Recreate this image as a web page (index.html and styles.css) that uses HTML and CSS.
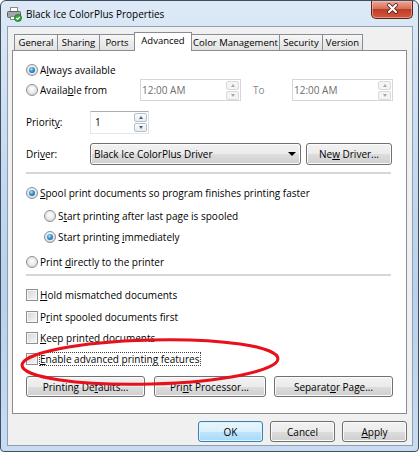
FILE: index.html
```html
<!DOCTYPE html>
<html lang="en">
<head>
  <meta charset="UTF-8" />
  <title>Black Ice ColorPlus Properties</title>
  <link rel="stylesheet" href="styles.css">
</head>
<body>
  <div class="window">
    <div class="titlebar">
      <svg class="title-icon" width="15" height="15" viewBox="0 0 15 15">
        <rect x="3.5" y="0.5" width="7" height="4" fill="#fff" stroke="#8a8a8a" />
        <rect x="0.5" y="4.5" width="13" height="6" rx="1" fill="#a3a7ad" stroke="#5d6166" />
        <rect x="3.5" y="9.5" width="6" height="3" fill="#fff" stroke="#8a8a8a" />
        <circle cx="11" cy="11" r="3.5" fill="#34a93c" stroke="#1b6e22" stroke-width="0.8" />
        <path d="M9.2 11 l1.3 1.3 2.3 -2.5" fill="none" stroke="#fff" stroke-width="1.2" />
      </svg>
      <span class="title">Black Ice ColorPlus Properties</span>
      <div class="close">
        <svg width="42" height="18" viewBox="0 0 42 18">
          <path d="M18 5 L25 12 M25 5 L18 12" stroke="#4a1a12" stroke-width="3.8" stroke-linecap="round" />
          <path d="M18 5 L25 12 M25 5 L18 12" stroke="#fff" stroke-width="2.2" stroke-linecap="round" />
        </svg>
      </div>
    </div>

    <div class="client">
      <div class="tabs">
        <div class="tab w-general">General</div>
        <div class="tab w-sharing">Sharing</div>
        <div class="tab w-ports">Ports</div>
        <div class="tab active w-advanced">Advanced</div>
        <div class="tab w-color">Color Management</div>
        <div class="tab w-security">Security</div>
        <div class="tab w-version">Version</div>
      </div>

      <div class="panel">
        <div class="row"><span class="radio checked"></span><span>A<u>l</u>ways available</span></div>

        <div class="row row-tall">
          <div class="from-label"><span class="radio"></span><span>Availa<u>b</u>le from</span></div>
          <div class="timebox">
            <span class="time-text">12:00 AM</span>
            <span class="spin disabled"><span class="spin-btn"><i class="arrow-up"></i></span><span class="spin-btn"><i class="arrow-down"></i></span></span>
          </div>
          <div class="to-label">To</div>
          <div class="timebox">
            <span class="time-text">12:00 AM</span>
            <span class="spin disabled"><span class="spin-btn"><i class="arrow-up"></i></span><span class="spin-btn"><i class="arrow-down"></i></span></span>
          </div>
        </div>

        <div class="row row-tall mt-10">
          <div class="field-label">Priorit<u>y</u>:</div>
          <div class="spinbox">
            <span class="spin-text">1</span>
            <span class="spin"><span class="spin-btn"><i class="arrow-up"></i></span><span class="spin-btn"><i class="arrow-down"></i></span></span>
          </div>
        </div>

        <div class="row row-tall mt-10">
          <div class="field-label">Dri<u>v</u>er:</div>
          <div class="combo">
            <span>Black Ice ColorPlus Driver</span>
            <i class="combo-arrow"></i>
          </div>
          <div class="btn btn-newdriver"><span>Ne<u>w</u> Driver...</span></div>
        </div>

        <div class="sep mt-7"></div>

        <div class="row mt-10"><span class="radio checked"></span><span><u>S</u>pool print documents so program finishes printing faster</span></div>
        <div class="row sub mt-5"><span class="radio"></span><span>S<u>t</u>art printing after last page is spooled</span></div>
        <div class="row sub mt-3"><span class="radio checked"></span><span>Start printing <u>i</u>mmediately</span></div>
        <div class="row mt-7"><span class="radio"></span><span>Print <u>d</u>irectly to the printer</span></div>

        <div class="sep mt-3"></div>

        <div class="row mt-10"><span class="check"></span><span><u>H</u>old mismatched documents</span></div>
        <div class="row mt-4"><span class="check"></span><span>P<u>r</u>int spooled documents first</span></div>
        <div class="row mt-3"><span class="check"></span><span><u>K</u>eep printed documents</span></div>
        <div class="row mt-3"><span class="check"></span><span class="focus"><u>E</u>nable advanced printing features</span></div>

        <div class="panel-buttons">
          <div class="btn btn-wide"><span>Printing De<u>f</u>aults...</span></div>
          <div class="btn btn-mid"><span>Pri<u>n</u>t Processor...</span></div>
          <div class="btn btn-wide"><span>Separat<u>o</u>r Page...</span></div>
        </div>
      </div>

      <div class="dialog-buttons">
        <div class="btn btn-dialog default">OK</div>
        <div class="btn btn-dialog">Cancel</div>
        <div class="btn btn-dialog"><span><u>A</u>pply</span></div>
      </div>
    </div>

    <!-- красный овал поверх окна -->
    <svg class="annotation" width="419" height="452" viewBox="0 0 419 452">
      <ellipse cx="150" cy="362" rx="128" ry="22" transform="rotate(-1.5 150 362)" fill="none" stroke="#e8101a" stroke-width="3" />
    </svg>
  </div>
</body>
</html>
```

FILE: styles.css
```css
html, body {
  margin: 0;
  padding: 0;
  background: #fff;
  font-family: "Open Sans", "Noto Sans", sans-serif;
  font-size: 10px;
  color: #000;
}

u {
  text-decoration: underline;
  text-underline-offset: 1px;
}

/* Окно */
.window {
  position: relative;
  box-sizing: border-box;
  width: 419px;
  height: 452px;
  border: 1px solid #3e4f63;
  border-radius: 6px 6px 4px 4px;
  background: linear-gradient(to bottom, #dde9f6 0%, #c6daf0 35%, #b9d1ec 65%, #c8dbf1 100%);
  padding: 0 5px 5px 6px;
  display: flex;
  flex-direction: column;
}

.titlebar {
  height: 25px;
  display: flex;
  align-items: center;
  flex: none;
}

.title-icon {
  margin-right: 4px;
  margin-top: 1px;
}

.title {
  color: #000;
}

.close {
  margin-left: auto;
  align-self: flex-start;
  box-sizing: border-box;
  width: 42px;
  height: 18px;
  border: 1px solid #5b2218;
  border-top: none;
  border-radius: 0 0 5px 5px;
  background: linear-gradient(to bottom, #e9a996 0%, #d8705a 45%, #c23c25 50%, #d0593f 100%);
  box-shadow: inset 0 0 0 1px rgba(255, 210, 200, 0.5);
}

.close svg {
  display: block;
  margin-top: -1px;
  margin-left: -1px;
}

.client {
  flex: 1;
  background: #f0f0f0;
  border: 1px solid #8c9fb6;
  display: flex;
  flex-direction: column;
}

/* Вкладки */
.tabs {
  display: flex;
  align-items: flex-end;
  height: 18px;
  padding: 5px 0 0 6px;
  position: relative;
  z-index: 1;
  font-size: 9.5px;
}

.tab {
  box-sizing: border-box;
  height: 16px;
  margin-left: -1px;
  border: 1px solid #898c95;
  border-bottom: none;
  background: linear-gradient(to bottom, #f7f7f7 0%, #ececec 50%, #e2e2e2 100%);
  display: flex;
  align-items: center;
  justify-content: center;
  white-space: nowrap;
  overflow: hidden;
}

.tab:first-child {
  margin-left: 0;
}

.tab.active {
  height: 19px;
  margin-bottom: -1px;
  background: #fff;
  padding-bottom: 3px;
  position: relative;
  z-index: 2;
}

.w-general { width: 44px; }
.w-sharing { width: 43px; }
.w-ports { width: 36px; }
.w-advanced { width: 58px; }
.w-color { width: 89px; }
.w-security { width: 44px; }
.w-version { width: 41px; }

.panel {
  box-sizing: border-box;
  height: 364px;
  margin: 0 5px 0 4px;
  background: #fff;
  border: 1px solid #898c95;
  padding: 10px 13px 0 13px;
  flex: none;
}

/* Строки */
.row {
  display: flex;
  align-items: center;
  height: 18px;
  white-space: nowrap;
}

.row-tall {
  height: 22px;
}

.sub {
  padding-left: 18px;
}

.mt-3 { margin-top: 3px; }
.mt-4 { margin-top: 4px; }
.mt-5 { margin-top: 5px; }
.mt-7 { margin-top: 7px; }
.mt-10 { margin-top: 10px; }

.radio {
  position: relative;
  box-sizing: border-box;
  flex: none;
  width: 12px;
  height: 12px;
  margin-right: 2px;
  border-radius: 50%;
  border: 1px solid #8c8f94;
  background: radial-gradient(circle at 50% 40%, #ffffff 0%, #ececec 45%, #c9cbce 100%);
}

.radio.checked::after {
  content: "";
  position: absolute;
  left: 2px;
  top: 2px;
  width: 6px;
  height: 6px;
  border-radius: 50%;
  background: radial-gradient(circle at 40% 35%, #b5e4fc 0%, #3a98d6 40%, #0f4a80 100%);
}

.check {
  box-sizing: border-box;
  flex: none;
  width: 12px;
  height: 12px;
  margin-right: 2px;
  border: 1px solid #8e8f8f;
  background: linear-gradient(135deg, #d2d5da 0%, #f7f7f7 100%);
  box-shadow: inset 0 0 0 1px #f6f6f6;
}

.focus {
  outline: 1px dotted #444;
  outline-offset: 0;
  line-height: 12px;
  padding: 0 1px 0 0;
}

.sep {
  height: 2px;
  background: #d6d6d6;
  margin-right: 2px;
}

/* Поля */
.from-label {
  width: 114px;
  display: flex;
  align-items: center;
  flex: none;
}

.to-label {
  width: 51px;
  box-sizing: border-box;
  padding-left: 12px;
  color: #8a8a8a;
  flex: none;
}

.field-label {
  width: 64px;
  flex: none;
}

.timebox,
.spinbox {
  box-sizing: border-box;
  height: 22px;
  border: 1px solid #d6d6d6;
  background: #fff;
  display: flex;
  align-items: center;
  flex: none;
}

.timebox {
  width: 101px;
  color: #6d6d6d;
  padding-left: 1px;
}

.spinbox {
  width: 59px;
  height: 23px;
  border-color: #abadb3 #dbdfe6 #e3e9ef #e2e3ea;
  padding-left: 4px;
}

.spin {
  margin-left: auto;
  margin-right: 1px;
  display: flex;
  flex-direction: column;
  gap: 1px;
}

.spin-btn {
  box-sizing: border-box;
  width: 13px;
  height: 9px;
  border: 1px solid #b6bfcc;
  border-radius: 2px;
  background: linear-gradient(to bottom, #fbfcfd, #e6ebf1);
  display: flex;
  align-items: center;
  justify-content: center;
}

.spin.disabled .spin-btn {
  border-color: #dadada;
  background: #f4f4f4;
}

.arrow-up,
.arrow-down {
  width: 0;
  height: 0;
  border-left: 2.5px solid transparent;
  border-right: 2.5px solid transparent;
}

.arrow-up { border-bottom: 3px solid #4d5f80; }
.arrow-down { border-top: 3px solid #4d5f80; }

.spin.disabled .arrow-up { border-bottom-color: #a8a8a8; }
.spin.disabled .arrow-down { border-top-color: #a8a8a8; }

.combo {
  box-sizing: border-box;
  width: 211px;
  height: 22px;
  border: 1px solid #707070;
  border-radius: 3px;
  background: linear-gradient(to bottom, #f2f2f2 0%, #ebebeb 50%, #dddddd 51%, #cfcfcf 100%);
  box-shadow: inset 0 0 0 1px #fbfbfb;
  display: flex;
  align-items: center;
  padding-left: 3px;
  flex: none;
}

.combo-arrow {
  margin-left: auto;
  margin-right: 4px;
  width: 0;
  height: 0;
  border-left: 4px solid transparent;
  border-right: 4px solid transparent;
  border-top: 4px solid #000;
}

/* Кнопки */
.btn {
  box-sizing: border-box;
  height: 21px;
  border: 1px solid #707070;
  border-radius: 3px;
  background: linear-gradient(to bottom, #f2f2f2 0%, #ebebeb 50%, #dddddd 51%, #cfcfcf 100%);
  box-shadow: inset 0 0 0 1px #fbfbfb;
  display: flex;
  align-items: center;
  justify-content: center;
  white-space: nowrap;
  flex: none;
}

.btn-newdriver {
  width: 86px;
  height: 22px;
  margin-left: 5px;
}

.panel-buttons {
  display: flex;
  justify-content: space-between;
  margin-top: 8px;
}

.btn-wide { width: 119px; }
.btn-mid { width: 112px; }

.dialog-buttons {
  display: flex;
  justify-content: flex-end;
  gap: 7px;
  margin-top: 7px;
  padding-right: 5px;
}

.btn-dialog {
  width: 65px;
}

.btn.default {
  border-color: #3c7fb1;
  background: linear-gradient(to bottom, #eaf6fd 0%, #d9f0fc 50%, #bee6fd 51%, #a7d9f5 100%);
  box-shadow: inset 0 0 0 1px #dff3fd;
}

.annotation {
  position: absolute;
  left: -1px;
  top: -1px;
  pointer-events: none;
}
```
